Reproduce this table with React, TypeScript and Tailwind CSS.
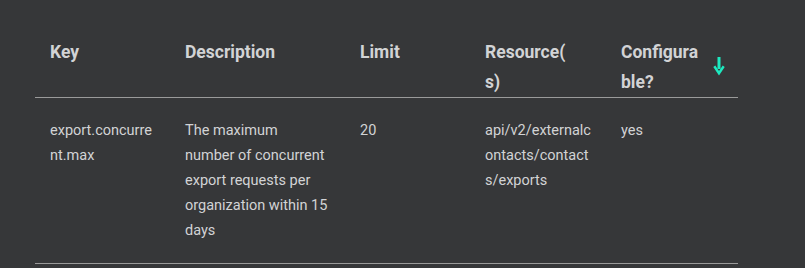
import React from 'react';

interface LimitRow {
  key: string;
  description: string;
  limit: string;
  resource: string;
  configurable: string;
}

const rows: LimitRow[] = [
  {
    key: 'export.concurrent.max',
    description: 'The maximum number of concurrent export requests per organization within 15 days',
    limit: '20',
    resource: 'api/v2/externalcontacts/contacts/exports',
    configurable: 'yes',
  },
];

const App: React.FC = () => {
  return (
    <div className="w-[805px] h-[268px] bg-[#363739] pt-[17px] pl-[35px] overflow-hidden font-['Roboto',sans-serif] text-[#d2d3d5]">
      <table className="w-[703px] table-fixed border-collapse">
        <colgroup>
          <col className="w-[135px]" />
          <col className="w-[175px]" />
          <col className="w-[125px]" />
          <col className="w-[136px]" />
          <col className="w-[132px]" />
        </colgroup>
        <thead>
          <tr className="border-b border-[#9a9a9a]">
            <th className="px-[15px] pt-5 pb-0 text-left align-top text-[17.5px] leading-[30px] font-bold">Key</th>
            <th className="px-[15px] pt-5 pb-0 text-left align-top text-[17.5px] leading-[30px] font-bold">Description</th>
            <th className="px-[15px] pt-5 pb-0 text-left align-top text-[17.5px] leading-[30px] font-bold">Limit</th>
            <th className="px-[15px] pt-5 pb-0 text-left align-top text-[17.5px] leading-[30px] font-bold">
              <span className="block w-[88px] wrap-anywhere">Resource(s)</span>
            </th>
            <th className="pl-[15px] pr-0 pt-5 pb-0 text-left align-top text-[17.5px] leading-[30px] font-bold">
              <div className="flex items-center justify-between">
                <span className="w-[82px] break-all">Configurable?</span>
                <svg className="w-[12px] h-[19px] mr-[13px] mt-[-2px]" viewBox="0 0 12 19" fill="#1de9c0">
                  <rect x="4.5" y="0" width="3" height="12" />
                  <path d="M0.3 10 L6 18.5 L11.7 10 L9.7 8.6 L6 14 L2.3 8.6 Z" />
                </svg>
              </div>
            </th>
          </tr>
        </thead>
        <tbody>
          {rows.map((row) => (
            <tr key={row.key} className="border-b border-[#9a9a9a]">
              <td className="px-[15px] py-5 align-top text-[14.5px] leading-[25px] break-all">{row.key}</td>
              <td className="px-[15px] py-5 align-top text-[14.5px] leading-[25px]">{row.description}</td>
              <td className="px-[15px] py-5 align-top text-[14.5px] leading-[25px]">{row.limit}</td>
              <td className="px-[15px] py-5 align-top text-[14.5px] leading-[25px] break-all">{row.resource}</td>
              <td className="px-[15px] py-5 align-top text-[14.5px] leading-[25px]">{row.configurable}</td>
            </tr>
          ))}
        </tbody>
      </table>
    </div>
  );
};

export default App;
